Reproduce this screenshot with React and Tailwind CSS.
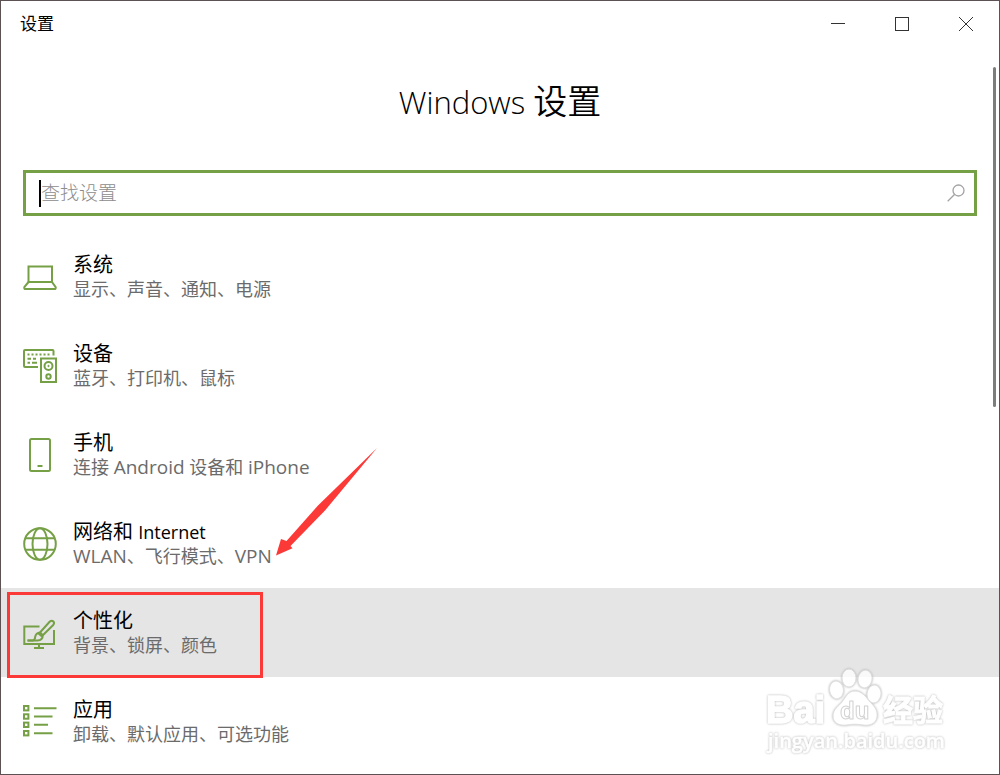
import React, { useState } from "react";

function LaptopIcon() {
  return (
    <svg viewBox="0 0 34 34" className="h-[34px] w-[34px] shrink-0" fill="none" stroke="#76a046" strokeWidth="2" aria-hidden="true">
      <path d="M5.5 22V6.5H29V22Z" />
      <path d="M5.5 22L1.3 27.2Q1 29 2.6 29H31.4Q33 29 32.7 27.2L29 22" />
    </svg>
  );
}

function DevicesIcon() {
  return (
    <svg viewBox="0 0 34 34" className="h-[34px] w-[34px] shrink-0" fill="none" stroke="#76a046" strokeWidth="2" aria-hidden="true">
      <path d="M30.5 6.5V2Q30.5 1 29.5 1H2Q1 1 1 2V17Q1 18 2 18H15" />
      <path d="M4.5 5.5H28" strokeDasharray="2 2" />
      <path d="M4.5 9.7H8M10 9.7H13" />
      <path d="M4.5 13.7H7M9 13.7H14" />
      <rect x="18" y="9.5" width="15" height="23.5" />
      <circle cx="25.5" cy="17" r="4" />
      <circle cx="25.5" cy="17" r="0.7" fill="#76a046" strokeWidth="1" />
      <circle cx="25.5" cy="27.5" r="2.2" />
    </svg>
  );
}

function PhoneIcon() {
  return (
    <svg viewBox="0 0 34 34" className="h-[34px] w-[34px] shrink-0" fill="none" stroke="#76a046" strokeWidth="2" aria-hidden="true">
      <rect x="7" y="1" width="20" height="32" rx="1.5" />
      <path d="M14.5 28H19.5" />
    </svg>
  );
}

function GlobeIcon() {
  return (
    <svg viewBox="0 0 34 34" className="h-[34px] w-[34px] shrink-0" fill="none" stroke="#76a046" strokeWidth="2" aria-hidden="true">
      <circle cx="17" cy="17" r="15.8" />
      <ellipse cx="17" cy="17" rx="7.5" ry="15.8" />
      <path d="M2.5 11.3H31.5M2.5 22.7H31.5" />
    </svg>
  );
}

function PersonalizeIcon() {
  return (
    <svg viewBox="0 0 34 34" className="h-[34px] w-[34px] shrink-0" fill="none" stroke="#76a046" strokeWidth="2" aria-hidden="true">
      <path d="M16.5 10.5H1.3V28H31V14" />
      <path d="M16 28V32M11 32H21" />
      <path d="M17 16.5L26.8 5.6Q28.8 4 30.4 5.5Q31.8 7.2 30.2 9L19.8 19.2" />
      <path d="M17 16.5L19.8 19.2Q19.8 24.3 14.5 24.4H4.5" />
      <path d="M4.5 24.4H10.2Q12 23.8 12.2 20.8Q13 16.8 17 16.5" />
      <path d="M15 17L19 20.6" />
    </svg>
  );
}

function AppsIcon() {
  return (
    <svg viewBox="0 0 34 34" className="h-[34px] w-[34px] shrink-0" fill="none" stroke="#76a046" strokeWidth="2" aria-hidden="true">
      <rect x="1" y="1" width="4.4" height="4.4" />
      <rect x="1" y="9.3" width="4.4" height="4.4" />
      <rect x="1" y="17.6" width="4.4" height="4.4" />
      <rect x="1" y="26" width="4.4" height="4.4" />
      <path d="M11 3.2H33.5M11 11.5H29.5M11 19.8H25M11 28.2H29.5" />
    </svg>
  );
}

function Watermark() {
  return (
    <svg
      viewBox="0 0 184 94"
      className="pointer-events-none absolute right-[50px] bottom-4 h-[94px] w-[184px] opacity-80 drop-shadow-[0_0_1px_#a3a3a3]"
      fill="#ffffff"
      stroke="#ffffff"
      strokeWidth="1"
      strokeLinejoin="round"
      fontFamily='"Open Sans", "Noto Sans CJK SC", sans-serif'
      aria-hidden="true"
    >
      <text x="1" y="59" fontSize="38" fontWeight="700" strokeWidth="1.500" fontFamily='"Liberation Sans", sans-serif'>Bai</text>
      <g stroke="#d8d8d8">
        <ellipse cx="84" cy="14" rx="7" ry="9" />
        <ellipse cx="100" cy="15" rx="7" ry="9" transform="rotate(10 100 15)" />
        <ellipse cx="71.500" cy="26" rx="7" ry="9" transform="rotate(-8 71 26)" />
        <ellipse cx="109" cy="30" rx="7" ry="9" transform="rotate(8 109 30)" />
        <path d="M90 27C97 27 101 33 105 38C109 42 113 46 112 53C111 60 104 62 98 61C92 60 88 60 82 61C74 62 68 59 68 52C68 45 74 42 77 38C81 33 83 27 90 27Z" />
        <text x="75" y="55" fontSize="24" fontWeight="700" stroke="#c8c8c8" fontFamily='"Liberation Sans", sans-serif'>du</text>
      </g>
      <text x="118" y="57" fontSize="30" fontWeight="700">经验</text>
      <text x="3" y="84" fontSize="20" fontWeight="600" strokeWidth="0.500">jingyan.baidu.com</text>
    </svg>
  );
}

const categories = [
  { id: "system", title: "系统", detail: "显示、声音、通知、电源", Icon: LaptopIcon },
  { id: "devices", title: "设备", detail: "蓝牙、打印机、鼠标", Icon: DevicesIcon },
  {
    id: "phone",
    title: "手机",
    detail: (
      <>
        连接 <span className="text-[19px]">Android</span> 设备和 <span className="text-[19px]">iPhone</span>
      </>
    ),
    Icon: PhoneIcon,
  },
  {
    id: "network",
    title: (
      <>
        网络和 <span className="text-[18px]">Internet</span>
      </>
    ),
    detail: (
      <>
        <span className="text-[19px]">WLAN</span>、飞行模式、<span className="text-[19px]">VPN</span>
      </>
    ),
    Icon: GlobeIcon,
    arrow: true,
  },
  { id: "personalization", title: "个性化", detail: "背景、锁屏、颜色", Icon: PersonalizeIcon, active: true },
  { id: "apps", title: "应用", detail: "卸载、默认应用、可选功能", Icon: AppsIcon },
];

function CategoryRow({ item }) {
  const { Icon } = item;
  return (
    <li className="relative">
      <a
        href={`#${item.id}`}
        className={`flex h-[89px] items-center gap-4 px-[22px] hover:bg-[#e5e5e5] ${item.active ? "bg-[#e5e5e5]" : ""}`}
      >
        <Icon />
        <span className="flex flex-col leading-6">
          <span className="text-[20px] text-black">{item.title}</span>
          <span className="text-[18px] text-[#6b6b6b]">{item.detail}</span>
        </span>
      </a>
      {item.arrow && (
        <svg viewBox="0 0 102 108" className="pointer-events-none absolute -top-[51px] left-[275px] z-10 h-[108px] w-[102px]" aria-hidden="true">
          <path d="M0 107.500L5 91L10.500 93L42 57.500L101 0L49 62.500L14.500 98L16.500 100.300Z" fill="#fb3a38" />
        </svg>
      )}
      {item.active && (
        <div className="pointer-events-none absolute top-1 left-1.5 h-[86px] w-64 border-[3px] border-[#fb3a38]" />
      )}
    </li>
  );
}

export default function App() {
  const [query, setQuery] = useState("");

  return (
    <div className="relative min-h-screen border border-[#5c5254] bg-white font-['Open_Sans','Noto_Sans_CJK_SC',sans-serif]">
      <header className="flex h-[46px] items-center justify-between pr-px pl-[19px]">
        <span className="text-[17px] text-black">设置</span>
        <div className="flex h-full text-[#333]">
          <button type="button" aria-label="最小化" className="flex w-16 items-center justify-center hover:bg-[#e5e5e5]">
            <svg viewBox="0 0 16 16" className="h-4 w-4" fill="none" stroke="currentColor">
              <path d="M1 7.500H15" />
            </svg>
          </button>
          <button type="button" aria-label="最大化" className="flex w-16 items-center justify-center hover:bg-[#e5e5e5]">
            <svg viewBox="0 0 16 16" className="h-4 w-4" fill="none" stroke="currentColor">
              <rect x="1.500" y="1.500" width="13" height="13" />
            </svg>
          </button>
          <button type="button" aria-label="关闭" className="flex w-16 items-center justify-center hover:bg-[#e5e5e5]">
            <svg viewBox="0 0 16 16" className="h-4 w-4" fill="none" stroke="currentColor">
              <path d="M1 1L15 15M15 1L1 15" />
            </svg>
          </button>
        </div>
      </header>

      <main>
        <h1 className="mt-8 text-center text-[31px] leading-[44px] font-light text-black">
          Windows <span className="text-[34px] font-[350]">设置</span>
        </h1>

        <form
          role="search"
          onSubmit={(e) => e.preventDefault()}
          className="mx-[22px] mt-[46px] flex h-[46px] items-center border-[3px] border-[#76a046] pr-[9px] pl-[13px]"
        >
          <span className="h-[27px] w-0.5 bg-black" />
          <input
            type="text"
            aria-label="查找设置"
            placeholder="查找设置"
            value={query}
            onChange={(e) => setQuery(e.target.value)}
            className="h-full min-w-0 flex-1 text-[19px] font-light text-black outline-none placeholder:text-[#8c8c8c]"
          />
          <button type="submit" aria-label="搜索">
            <svg viewBox="0 0 18 18" className="h-[18px] w-[18px]" fill="none" stroke="#a3a3a3" strokeWidth="1.300">
              <circle cx="11.500" cy="6.500" r="5.500" />
              <path d="M7.500 10.500L0.700 17.300" />
            </svg>
          </button>
        </form>

        <ul className="mt-4">
          {categories.map((item) => (
            <CategoryRow key={item.id} item={item} />
          ))}
        </ul>
      </main>

      <div className="absolute top-[66px] right-[3px] h-[340px] w-[3px] rounded-sm bg-[#7d7d7d]" />
      <Watermark />
    </div>
  );
}
